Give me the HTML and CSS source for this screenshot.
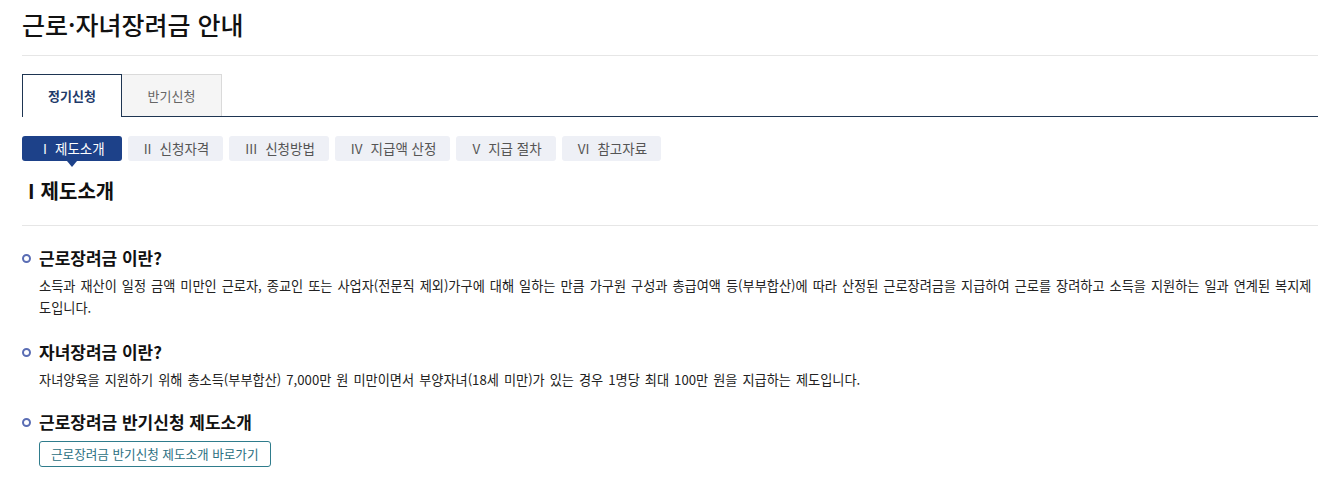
FILE: index.html
```html
<!DOCTYPE html>
<html lang="ko">
<head>
    <meta charset="UTF-8">
    <meta name="viewport" content="width=device-width, initial-scale=1.0">
    <title>근로·자녀장려금 안내</title>
    <link rel="stylesheet" href="styles.css">
</head>
<body>
    <div class="page">
        <h1 class="page-title">근로·자녀장려금 안내</h1>

        <ul class="tabs">
            <li class="tab active">정기신청</li>
            <li class="tab">반기신청</li>
        </ul>

        <ul class="steps">
            <li class="step active"><span class="num">I</span>제도소개</li>
            <li class="step"><span class="num">II</span>신청자격</li>
            <li class="step"><span class="num">III</span>신청방법</li>
            <li class="step"><span class="num">IV</span>지급액 산정</li>
            <li class="step"><span class="num">V</span>지급 절차</li>
            <li class="step"><span class="num">VI</span>참고자료</li>
        </ul>

        <h2 class="step-title"><span class="num">I</span>제도소개</h2>

        <div class="section">
            <h3 class="sec-title">근로장려금 이란?</h3>
            <p class="sec-text">소득과 재산이 일정 금액 미만인 근로자, 종교인 또는 사업자(전문직 제외)가구에 대해 일하는 만큼 가구원 구성과 총급여액 등(부부합산)에 따라 산정된 근로장려금을 지급하여 근로를 장려하고 소득을 지원하는 일과 연계된 복지제도입니다.</p>
        </div>

        <div class="section">
            <h3 class="sec-title">자녀장려금 이란?</h3>
            <p class="sec-text">자녀양육을 지원하기 위해 총소득(부부합산) 7,000만 원 미만이면서 부양자녀(18세 미만)가 있는 경우 1명당 최대 100만 원을 지급하는 제도입니다.</p>
        </div>

        <div class="section last">
            <h3 class="sec-title">근로장려금 반기신청 제도소개</h3>
            <a class="link-btn" href="#">근로장려금 반기신청 제도소개 바로가기</a>
        </div>
    </div>
</body>
</html>
```

FILE: styles.css
```css
body {
    margin: 0;
    font-family: "Noto Sans CJK KR", "Noto Sans", sans-serif;
    color: #222;
    background: #fff;
}
ul {
    list-style: none;
    margin: 0;
    padding: 0;
}
.page {
    padding: 0 20px 0 22px;
}
.page-title {
    margin: 0;
    padding: 7px 0 14px;
    font-size: 25px;
    line-height: 34px;
    font-weight: 500;
    color: #111;
    border-bottom: 1px solid #e6e6e6;
}

/* 정기/반기 탭 */
.tabs {
    display: flex;
    margin-top: 18px;
    border-bottom: 1px solid #1e3552;
}
.tab {
    width: 100px;
    height: 42px;
    line-height: 42px;
    text-align: center;
    font-size: 13px;
    color: #666;
    background: #f5f5f5;
    border: 1px solid #dadada;
    border-bottom: none;
    border-left: none;
    box-sizing: border-box;
}
.tab.active {
    height: 43px;
    margin-bottom: -1px;
    background: #fff;
    color: #1e3a6a;
    font-weight: 700;
    border: 1px solid #1e3552;
    border-bottom: none;
}

/* 단계 메뉴 */
.steps {
    display: flex;
    gap: 6px;
    margin-top: 19px;
}
.step {
    position: relative;
    height: 25px;
    line-height: 25px;
    padding: 0 14px 0 16px;
    font-size: 13.5px;
    color: #555;
    background: #eef0f6;
    border-radius: 3px;
}
.step:first-child {
    padding: 0 17px 0 21px;
}
.step .num {
    margin-right: 8px;
}
.step.active {
    background: #1d4189;
    color: #fff;
}
.step.active::after {
    content: "";
    position: absolute;
    left: 50%;
    bottom: -6px;
    margin-left: -5px;
    border-left: 5px solid transparent;
    border-right: 5px solid transparent;
    border-top: 6px solid #1d4189;
}
.step-title {
    margin: 16px 0 0;
    padding: 0 0 20px 6px;
    font-size: 20px;
    line-height: 28px;
    font-weight: 700;
    color: #111;
    border-bottom: 1px solid #e6e6e6;
}
.step-title .num {
    margin-right: 6px;
}

/* 본문 */
.section {
    padding-left: 17px;
    margin-top: 20px;
}
.section + .section {
    margin-top: 21px;
}
.section.last {
    margin-top: 19px;
}
.sec-title {
    position: relative;
    margin: 0;
    font-size: 17px;
    line-height: 24px;
    font-weight: 700;
    color: #111;
}
.sec-title::before {
    content: "";
    position: absolute;
    left: -17px;
    top: 8px;
    width: 5px;
    height: 5px;
    border: 2px solid #5a6db4;
    border-radius: 50%;
}
.sec-text {
    margin: 5px 0 0;
    font-size: 13.2px;
    line-height: 22px;
    word-spacing: 1.3px;
    color: #222;
}
.link-btn {
    display: inline-block;
    margin-top: 7px;
    padding: 0 11px;
    height: 24px;
    line-height: 24px;
    font-size: 12.6px;
    color: #2b6f82;
    text-decoration: none;
    border: 1px solid #2f7c8c;
    border-radius: 3px;
}
```
